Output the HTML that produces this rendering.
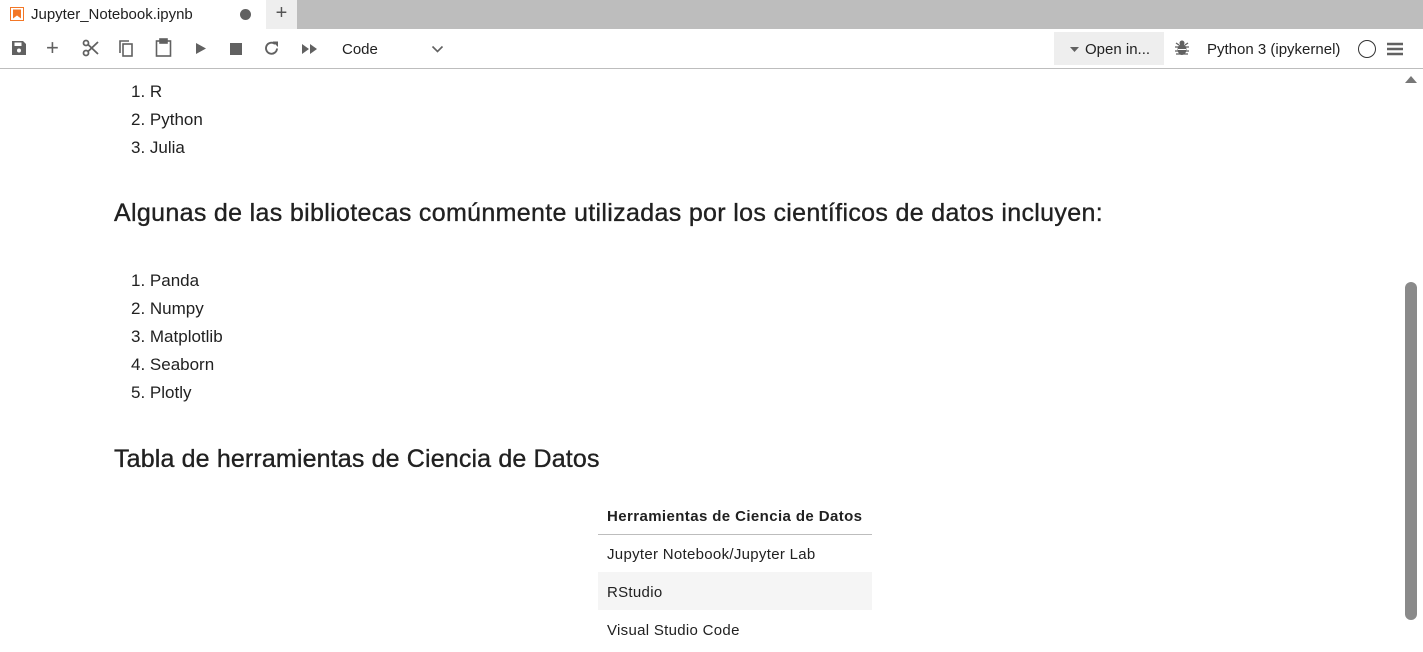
<!DOCTYPE html>
<html><head><meta charset="utf-8"><style>
*{margin:0;padding:0;box-sizing:border-box}
body{width:1423px;height:652px;overflow:hidden;background:#fff;font-family:"Liberation Sans",sans-serif;color:#212121;position:relative}
.a{position:absolute;white-space:nowrap}
.tabbar{position:absolute;left:0;top:0;width:1423px;height:29px;background:#bdbdbd}
.tab{position:absolute;left:0;top:0;width:266px;height:29px;background:#fff}
.plus{position:absolute;left:266px;top:0;width:31px;height:29px;background:#eee;font-size:20px;text-align:center;line-height:26px;color:#555}
.tb{position:absolute;left:0;top:29px;width:1423px;height:40px;background:#fff;border-bottom:1px solid #bdbdbd}
.li{font-size:17px;left:131px;margin-top:1px}
.h{font-size:25px;-webkit-text-stroke:0.35px #212121}
td,th{font-size:15px;text-align:left;padding:2px 9px 0;height:38px;letter-spacing:0.3px;overflow:hidden}
</style></head><body>
<div class="tabbar"></div>
<div class="tab">
<svg class="a" style="left:10px;top:7px" width="14" height="14" viewBox="0 0 14 14"><rect x="0.5" y="0.5" width="13" height="13" fill="#fff" stroke="#f37726"/><path d="M3 2.5h8v9l-4-3-4 3z" fill="#f37726"/></svg>
<div class="a" style="left:31px;top:6px;font-size:15px">Jupyter_Notebook.ipynb</div>
<div class="a" style="left:240px;top:9px;width:11px;height:11px;border-radius:50%;background:#616161"></div>
</div>
<div class="plus">+</div>
<div class="tb">
<svg class="a" style="left:11px;top:11px" width="16" height="16" viewBox="0 0 16 16"><path d="M1 1h11l3 3v11H1z" fill="#616161"/><rect x="3.5" y="2.5" width="7" height="3.5" fill="#fff"/><circle cx="8" cy="10.5" r="2" fill="#fff"/></svg>
<div class="a" style="left:46px;top:6px;font-size:22px;color:#616161">+</div>
<svg class="a" style="left:82px;top:10px" width="18" height="18" viewBox="0 0 18 18" fill="none" stroke="#616161" stroke-width="1.8"><circle cx="4" cy="4" r="2.5"/><circle cx="4" cy="14" r="2.5"/><path d="M6 5.5L16 15M6 12.5L16 3"/></svg>
<svg class="a" style="left:118px;top:10px" width="17" height="19" viewBox="0 0 17 19" fill="none" stroke="#616161" stroke-width="1.6"><path d="M2 14V2h9"/><rect x="5" y="5" width="9" height="12"/></svg>
<svg class="a" style="left:155px;top:9px" width="17" height="19" viewBox="0 0 17 19" fill="none" stroke="#616161" stroke-width="1.6"><rect x="1.5" y="3" width="14" height="15"/><rect x="5" y="1" width="7" height="4" fill="#616161"/></svg>
<svg class="a" style="left:195px;top:13px" width="12" height="13" viewBox="0 0 12 13"><path d="M1 1l10 5.5L1 12z" fill="#616161"/></svg>
<div class="a" style="left:230px;top:14px;width:12px;height:12px;background:#616161"></div>
<svg class="a" style="left:263px;top:11px" width="17" height="17" viewBox="0 0 17 17" fill="none" stroke="#616161" stroke-width="1.9"><path d="M14 8.5A5.5 5.5 0 1 1 12 4"/><path d="M9.5 1.5l5.5 0 0 5.5z" fill="#616161" stroke="none"/></svg>
<svg class="a" style="left:301px;top:14px" width="17" height="12" viewBox="0 0 17 12"><path d="M1 1l7 5-7 5zM9 1l7 5-7 5z" fill="#616161"/></svg>
<div class="a" style="left:342px;top:12px;font-size:15px">Code</div>
<svg class="a" style="left:431px;top:16px" width="13" height="8" viewBox="0 0 13 8"><path d="M1.5 1.5l5 5 5-5" fill="none" stroke="#616161" stroke-width="1.6"/></svg>
<div class="a" style="left:1054px;top:3px;width:110px;height:33px;background:#eee"></div>
<svg class="a" style="left:1070px;top:18px" width="9" height="6"><path d="M0 0h9L4.5 5z" fill="#616161"/></svg>
<div class="a" style="left:1085px;top:12px;font-size:15px">Open in...</div>
<svg class="a" style="left:1175px;top:11px" width="14" height="16" viewBox="0 0 14 16"><ellipse cx="7" cy="9.5" rx="4.5" ry="5.5" fill="#616161"/><circle cx="7" cy="3" r="2.5" fill="#616161"/><path d="M0 7h14M0 11h14M1 14h12M1 3l3 2M13 3l-3 2" stroke="#616161" stroke-width="1.3"/><path d="M3 9.5h8" stroke="#fff" stroke-width="1"/></svg>
<div class="a" style="left:1207px;top:12px;font-size:15px">Python 3 (ipykernel)</div>
<div class="a" style="left:1358px;top:11px;width:18px;height:18px;border:1.6px solid #333;border-radius:50%"></div>
<svg class="a" style="left:1387px;top:13px" width="16" height="14" viewBox="0 0 16 14"><path d="M0 2h16M0 7h16M0 12h16" stroke="#616161" stroke-width="2.6"/></svg>
</div>
<div class="a" style="left:1403px;top:69px;width:20px;height:583px;background:#fff"></div>
<svg class="a" style="left:1404px;top:74px" width="14" height="10"><path d="M1 9L7 2l6 7z" fill="#777"/></svg>
<div class="a" style="left:1405px;top:282px;width:12px;height:338px;background:#8a8a8a;border-radius:6px"></div>

<div class="a li" style="top:81px">1. R</div>
<div class="a li" style="top:109px">2. Python</div>
<div class="a li" style="top:137px">3. Julia</div>
<div class="a h" style="left:114px;top:199px;letter-spacing:0.33px">Algunas de las bibliotecas comúnmente utilizadas por los científicos de datos incluyen:</div>
<div class="a li" style="top:270px">1. Panda</div>
<div class="a li" style="top:298px">2. Numpy</div>
<div class="a li" style="top:326px">3. Matplotlib</div>
<div class="a li" style="top:354px">4. Seaborn</div>
<div class="a li" style="top:382px">5. Plotly</div>
<div class="a h" style="left:114px;top:445px;letter-spacing:0.15px">Tabla de herramientas de Ciencia de Datos</div>
<table class="a" style="left:598px;top:497px;width:274px;border-collapse:collapse;table-layout:fixed">
<tr><th style="border-bottom:1px solid #bdbdbd;height:37px;letter-spacing:0.4px">Herramientas de Ciencia de Datos</th></tr>
<tr><td>Jupyter Notebook/Jupyter Lab</td></tr>
<tr><td style="background:#f5f5f5">RStudio</td></tr>
<tr><td>Visual Studio Code</td></tr>
</table>
</body></html>
